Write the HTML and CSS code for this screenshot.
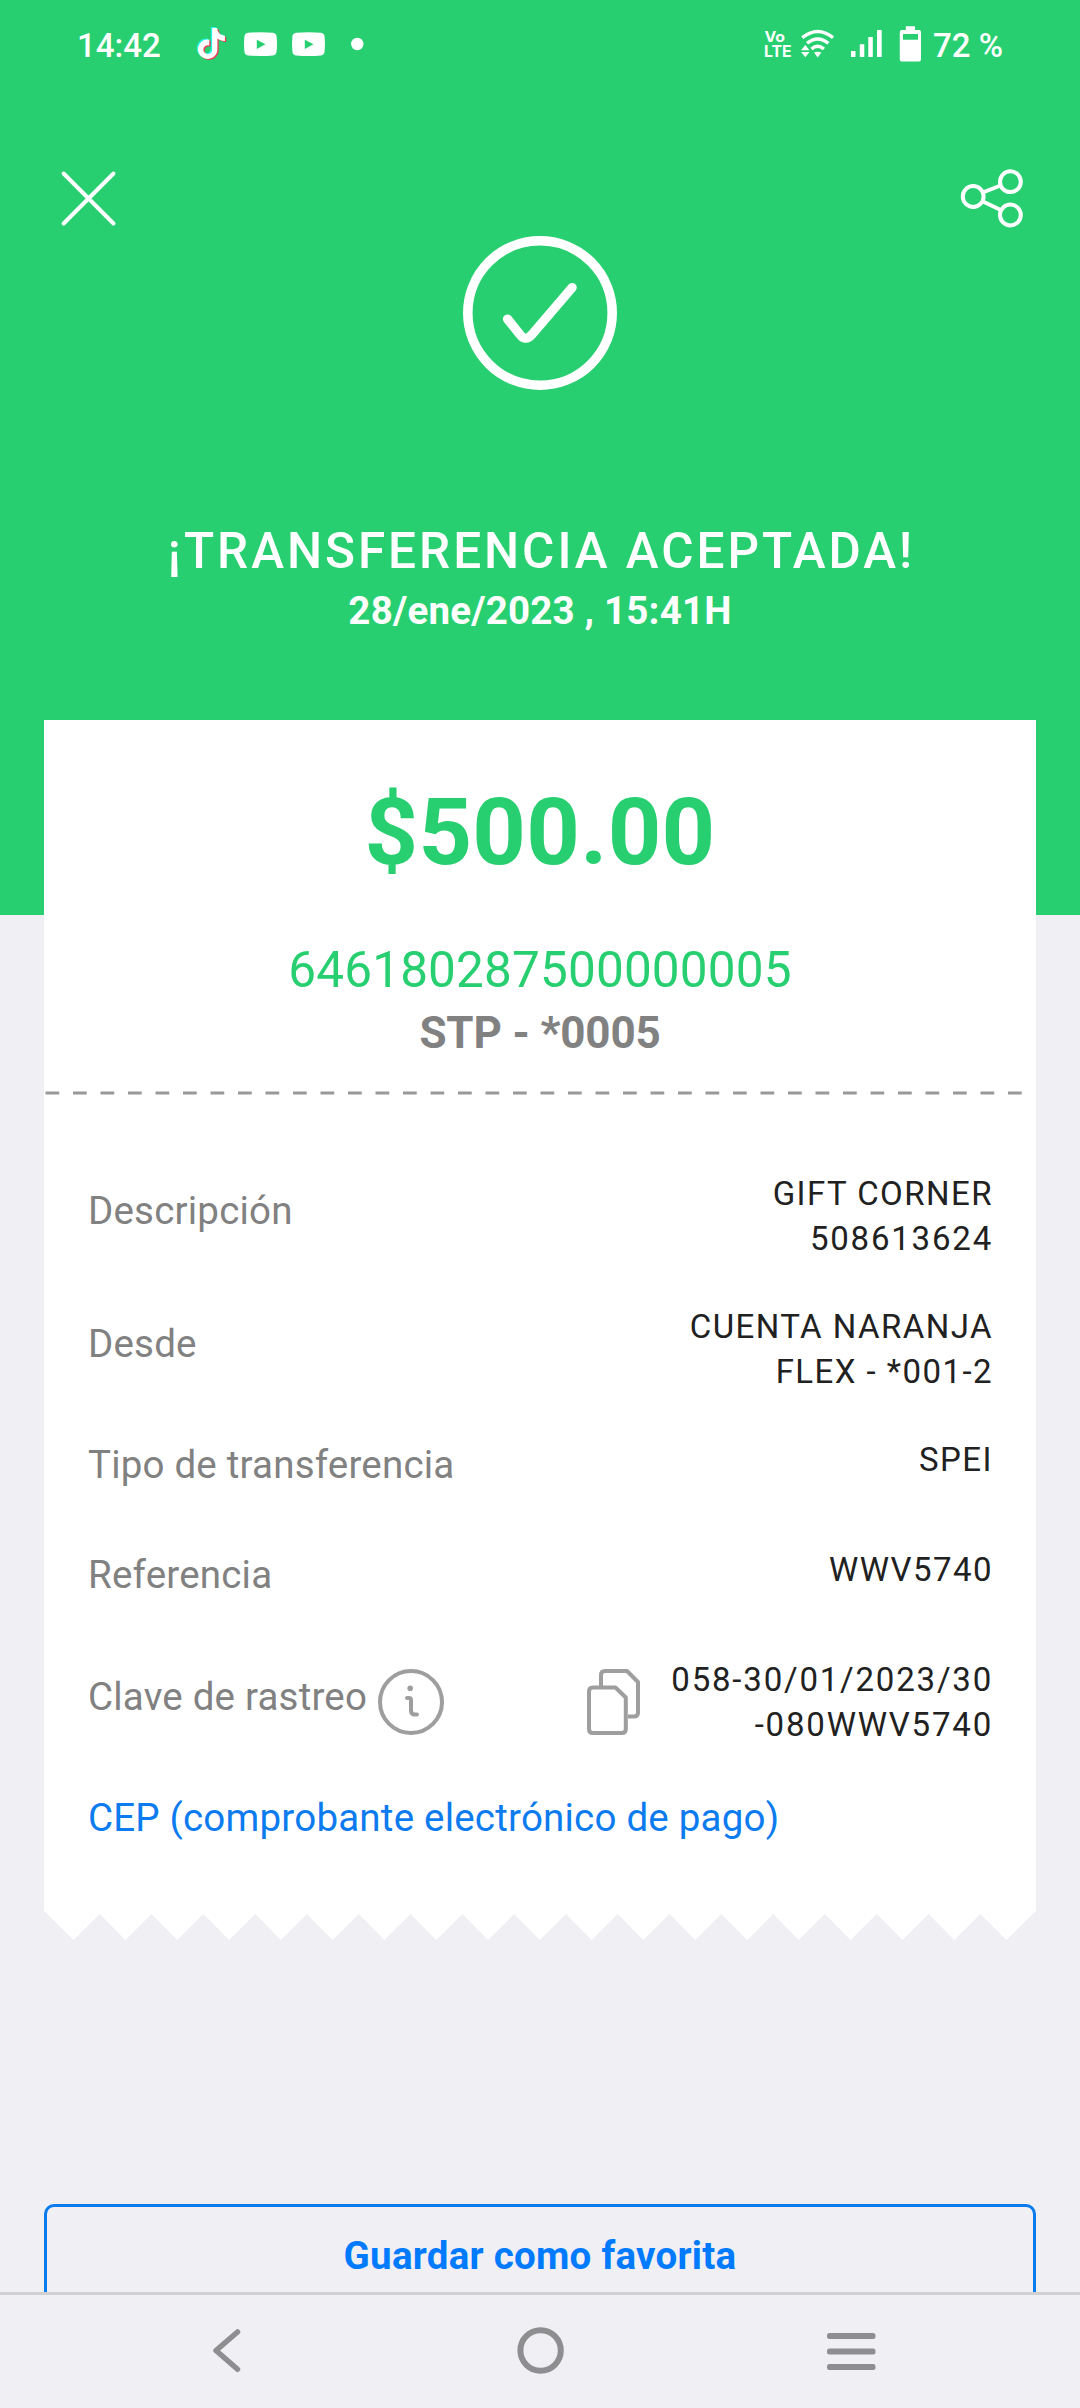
FILE: index.html
```html
<!DOCTYPE html>
<html lang="es">
<head>
<meta charset="utf-8">
<title>Transferencia aceptada</title>
<link rel="stylesheet" href="styles.css">
</head>
<body>
<div class="screen">
  <main class="content">
    <header class="hero">
      <div class="statusbar">
        <span class="status-text">14:42</span>
        <svg class="notifications" width="168" height="40" viewBox="196 25 168 40">
          <defs>
            <path id="note" d="M12.525.02c1.31-.02 2.61-.01 3.91-.02.08 1.53.63 3.09 1.75 4.17 1.12 1.11 2.7 1.62 4.24 1.79v4.03c-1.44-.05-2.89-.35-4.2-.97-.57-.26-1.1-.59-1.62-.93-.01 2.92.01 5.84-.02 8.75-.08 1.4-.54 2.79-1.35 3.94-1.31 1.92-3.58 3.17-5.91 3.21-1.43.08-2.86-.31-4.08-1.03-2.02-1.19-3.44-3.37-3.65-5.71-.02-.5-.03-1-.01-1.49.18-1.9 1.12-3.72 2.58-4.96 1.66-1.44 3.98-2.13 6.15-1.72.02 1.48-.04 2.96-.04 4.44-.99-.32-2.15-.23-3.02.37-.63.41-1.11 1.04-1.36 1.75-.21.51-.15 1.07-.14 1.61.24 1.64 1.82 3.02 3.5 2.87 1.12-.01 2.19-.66 2.77-1.61.19-.33.4-.67.41-1.06.1-1.79.06-3.57.07-5.36.01-4.03-.01-8.05.02-12.07z"/>
            <path id="player" d="M4 .8Q16.500 -.3 29 .8Q32.300 1.200 32.600 4.500Q33.400 12 32.600 19.500Q32.300 23 29 23.500Q16.500 24.500 4 23.500Q.7 23 .4 19.500Q-.4 12 .4 4.500Q.7 1.200 4 .8zM12.800 7.700V16.900L21.500 12.300z"/>
          </defs>
          <use href="#note" fill="#25f4ee" transform="translate(194.700 27) scale(1.290)"/>
          <use href="#note" fill="#ee3a57" transform="translate(197.300 29) scale(1.290)"/>
          <use href="#note" fill="#fff" transform="translate(196 28) scale(1.290)"/>
          <use href="#player" fill="#fff" fill-rule="evenodd" x="244" y="32"/>
          <use href="#player" fill="#fff" fill-rule="evenodd" x="292" y="32"/>
          <circle cx="357.300" cy="44" r="6.200" fill="#fff"/>
        </svg>
        <svg class="system" width="160" height="40" viewBox="764 25 160 40" fill="#fff">
          <text class="volte" x="765.500" y="41.800" font-size="14" textLength="20.500" lengthAdjust="spacingAndGlyphs">Vo</text>
          <text class="volte" x="765" y="57" font-size="15.500" textLength="27.500" lengthAdjust="spacingAndGlyphs">LTE</text>
          <g fill="none" stroke="#fff" stroke-width="3.400">
            <path d="M803.300 37.600Q818.700 25.400 834.100 37.600"/>
            <path d="M808 43.300Q818.700 34.500 829.400 43.300"/>
            <path d="M812.500 49Q818.700 43.400 824.900 49"/>
          </g>
          <path d="M815 52.500Q818.700 50.800 822.400 52.500L818.700 57.500zM806.300 45L810.500 50.200H802.100zM802.100 52H810.500L806.300 57.200z"/>
          <path d="M852 51h4.500v6H852zM860.800 44.300h4.500V57h-4.500zM869.300 37h4.500v20h-4.500zM878 30h4.700v27H878z"/>
          <path fill-rule="evenodd" d="M906.800 26.300H916V30h4q2 0 2 2V59.500q0 2-2 2H902.800q-2 0-2-2V32q0-2 2-2h4zM904 34v5.800h15V34z"/>
        </svg>
        <span class="status-text">72 %</span>
      </div>
      <div class="toolbar">
        <svg width="64" height="64" fill="none" stroke="#fff" stroke-width="4" stroke-linecap="round"><path d="M7.600 7.500L57.500 57.500M57.500 7.500L7.600 57.500"/></svg>
        <svg width="64" height="64" fill="none" stroke="#fff" stroke-width="4">
          <circle cx="13.200" cy="30.500" r="10.400"/><circle cx="50.400" cy="15.700" r="10.400"/><circle cx="50.400" cy="49" r="10.400"/>
          <path d="M22.800 26.500L40.600 19.500M22.500 35.300L41.200 44.200"/>
        </svg>
      </div>
      <svg class="check" width="154" height="154" fill="none" stroke="#fff">
        <circle cx="77" cy="77" r="72.200" stroke-width="9.600"/>
        <path d="M44.500 83L57 98.500Q62.500 106 69 98.500L109.200 51.500" stroke-width="9.200" stroke-linecap="round"/>
      </svg>
      <h1 class="title">¡TRANSFERENCIA ACEPTADA!</h1>
      <p class="date">28/ene/2023 , 15:41H</p>
    </header>

    <section class="receipt">
      <div class="amount">$500.00</div>
      <div class="account">646180287500000005</div>
      <div class="bank">STP - *0005</div>
      <svg class="divider" width="992" height="4"><path d="M1.500 2H979" stroke="#999" stroke-width="3" stroke-dasharray="13.750 13.750"/></svg>
      <div class="rows">
        <div class="row"><span class="label">Descripción</span><span class="value">GIFT CORNER<br><span class="digits">508613624</span></span></div>
        <div class="row"><span class="label">Desde</span><span class="value">CUENTA NARANJA<br>FLEX - *001-2</span></div>
        <div class="row"><span class="label">Tipo de transferencia</span><span class="value">SPEI</span></div>
        <div class="row"><span class="label">Referencia</span><span class="value">WWV5740</span></div>
        <div class="row">
          <span class="label">Clave de rastreo</span>
          <svg class="info" width="66" height="66" fill="none" stroke="#9e9e9e" stroke-width="4" stroke-linecap="round" stroke-linejoin="round">
            <circle cx="33" cy="33" r="31"/>
            <circle cx="32.200" cy="19.300" r="2.800" fill="#9e9e9e" stroke="none"/>
            <path d="M29 29H31Q33 29 33 31V41.500Q33 45.500 37 45.500H39"/>
          </svg>
          <svg class="copy" width="54" height="66" fill="none" stroke="#9e9e9e" stroke-width="4" stroke-linejoin="round">
            <path d="M15 17V6Q15 2 19 2H41L52 13V43.500Q52 47.500 48 47.500H42"/>
            <path d="M7 18.500H29.500L39.800 28.500V60Q39.800 64 35.800 64H7Q3 64 3 60V22.500Q3 18.500 7 18.500z"/>
          </svg>
          <span class="value digits">058-30/01/2023/30<br>-080WWV5740</span>
        </div>
      </div>
      <a class="cep">CEP (comprobante electrónico de pago)</a>
    </section>
    <svg class="torn" width="992" height="31" viewBox="0 0 992 31"><path fill="#fff" d="M0 0V1L29.600 30L55.800 4L81.400 30L107.600 4L133.200 30L159.400 4L185 30L211.200 4L236.800 30L263 4L288.600 30L314.800 4L340.400 30L366.600 4L392.200 30L418.400 4L444 30L470.200 4L495.800 30L522 4L547.600 30L573.800 4L599.400 30L625.600 4L651.200 30L677.400 4L703 30L729.200 4L754.800 30L781 4L806.600 30L832.800 4L858.400 30L884.600 4L910.200 30L936.400 4L962.400 30L992 1V0z"/></svg>
    <button class="favorite">Guardar como favorita</button>
  </main>
  <nav class="navbar">
    <svg width="50" height="60" fill="none" stroke="#8e8e91" stroke-width="5.500" stroke-linecap="round" stroke-linejoin="round"><path d="M34.500 12L13 30.500L34.500 49.300"/></svg>
    <svg width="50" height="60" fill="none" stroke="#8e8e91" stroke-width="6"><circle cx="25.600" cy="30.500" r="20.200"/></svg>
    <svg width="50" height="60" viewBox="-1 0 50 60" fill="#8e8e91"><rect x="-1" y="13" width="48.500" height="6" rx="2.500"/><rect x="-1" y="28.400" width="48.500" height="6" rx="2.500"/><rect x="-1" y="44" width="48.500" height="6" rx="2.500"/></svg>
  </nav>
</div>
</body>
</html>
```
FILE: styles.css
```css
* { box-sizing: border-box; margin: 0; }
body { background: #efeff4; font-family: Roboto, sans-serif; }
svg { display: block; flex: none; }

.screen { width: 1080px; height: 2408px; display: flex; flex-direction: column; }
.content { height: 2292px; overflow: hidden; }

.hero { height: 915px; background: #28cf70; color: #fff; text-align: center; }
.statusbar { height: 90px; padding: 0 77px; display: flex; align-items: center; }
.status-text { font-size: 33px; font-weight: 500; line-height: 40px; padding-top: 1px; white-space: nowrap; }
.notifications { margin-left: 35px; }
.system { margin-left: auto; margin-right: 10px; }
.volte { font-family: Inter, sans-serif; font-weight: 700; }
.toolbar { height: 146px; padding: 76px 56px 0; display: flex; justify-content: space-between; }
.check { margin: 0 auto; }
.title { margin-top: 132px; padding-left: 3px; font-size: 49.5px; font-weight: 500; line-height: 58px; letter-spacing: 2.95px; }
.date { margin-top: 8px; font-size: 38.5px; font-weight: 700; line-height: 46px; letter-spacing: .2px; }

.receipt { height: 1190px; margin: -195px 44px 0; padding-top: 57px; background: #fff; text-align: center; }
.amount { color: #28cf70; font-size: 93.5px; font-weight: 700; line-height: 110px; letter-spacing: .3px; }
.account { margin-top: 54px; color: #28cf70; font-size: 49.5px; line-height: 58px; letter-spacing: .15px; }
.bank { margin-top: 8px; color: #818181; font-size: 44px; font-weight: 700; line-height: 52px; letter-spacing: -.15px; }
.divider { margin-top: 32px; }
.rows { padding: 76px 44px 0; display: flex; flex-direction: column; gap: 43px; }
.row { min-height: 66px; display: flex; align-items: center; }
.row:nth-child(n + 4) { margin-top: 1px; }
.label { padding-bottom: 11px; color: #818181; font-size: 38.5px; line-height: 45px; letter-spacing: .2px; white-space: nowrap; }
.value { align-self: flex-start; margin: 0 -1px 0 auto; color: #212121; font-size: 33px; line-height: 45px; letter-spacing: 1.45px; text-align: right; white-space: nowrap; }
.digits { letter-spacing: 1.8px; }
.info { margin-left: 11px; }
.copy { margin-left: auto; }
.copy + .value { margin-left: 31px; }
.cep { display: block; margin: 48px 44px 0; color: #0c7bef; font-size: 38.5px; line-height: 45px; letter-spacing: .21px; text-align: left; }
.torn { margin: 0 44px; }

.favorite { display: block; width: 992px; height: 104px; margin: 263px 44px 0; padding: 0; border: 3px solid #0a7cf0; border-radius: 10px; background: none; color: #007aff; font: 700 38.5px/46px Roboto, sans-serif; letter-spacing: .25px; }

.navbar { height: 116px; padding-top: 25px; border-top: 3px solid #d1d1d3; display: flex; justify-content: center; gap: 262px; }
```
